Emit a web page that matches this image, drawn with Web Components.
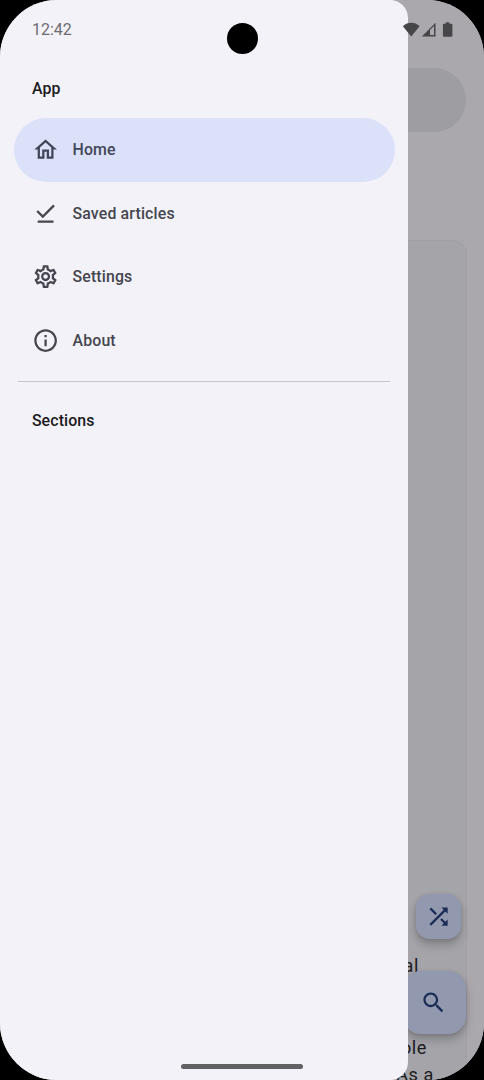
<!DOCTYPE html>
<html lang="en">
<head>
<meta charset="utf-8">
<title>Navigation drawer</title>
<style>
html,body{margin:0;background:#000;overflow:hidden}
body{font-family:Roboto,"Liberation Sans",sans-serif}
</style>
</head>
<body>
<phone-screen>
  <article-page slot="page"></article-page>
  <nav-drawer slot="drawer">
    <drawer-title>App</drawer-title>
    <drawer-item icon="home" selected>Home</drawer-item>
    <drawer-item icon="saved">Saved articles</drawer-item>
    <drawer-item icon="settings">Settings</drawer-item>
    <drawer-item icon="info">About</drawer-item>
    <drawer-divider></drawer-divider>
    <drawer-title>Sections</drawer-title>
  </nav-drawer>
  <status-bar slot="system">12:42</status-bar>
</phone-screen>
<script>
const ICONS = {
  home: 'M12 5.69l5 4.5V18h-2v-6H9v6H7v-7.81l5-4.5M12 3L2 12h3v8h6v-6h2v6h6v-8h3L12 3z',
  saved: 'M20.13 5.41L18.72 4 9.53 13.19 5.28 8.95 3.87 10.36 9.53 16.02zM5 18h14v2H5z',
  settings: 'M19.43 12.98c.04-.32.07-.64.07-.98s-.03-.66-.07-.98l2.11-1.65c.19-.15.24-.42.12-.64l-2-3.46c-.09-.16-.26-.25-.44-.25-.06 0-.12.01-.17.03l-2.49 1c-.52-.4-1.08-.73-1.69-.98l-.38-2.65C14.46 2.18 14.25 2 14 2h-4c-.25 0-.46.18-.49.42l-.38 2.65c-.61.25-1.17.59-1.69.98l-2.49-1c-.06-.02-.12-.03-.18-.03-.17 0-.34.09-.43.25l-2 3.46c-.13.22-.07.49.12.64l2.11 1.65c-.04.32-.07.65-.07.98s.03.66.07.98l-2.11 1.65c-.19.15-.24.42-.12.64l2 3.46c.09.16.26.25.44.25.06 0 .12-.01.17-.03l2.49-1c.52.4 1.08.73 1.69.98l.38 2.65c.03.24.24.42.49.42h4c.25 0 .46-.18.49-.42l.38-2.65c.61-.25 1.17-.59 1.69-.98l2.49 1c.06.02.12.03.18.03.17 0 .34-.09.43-.25l2-3.46c.12-.22.07-.49-.12-.64l-2.11-1.65zm-1.98-1.71c.04.31.05.52.05.73s-.02.43-.05.73l-.14 1.13.89.7 1.08.84-.7 1.21-1.27-.51-1.04-.42-.9.68c-.43.32-.84.56-1.25.73l-1.06.43-.16 1.13-.2 1.35h-1.4l-.19-1.35-.16-1.13-1.06-.43c-.43-.18-.83-.41-1.23-.71l-.91-.7-1.06.43-1.27.51-.7-1.21 1.08-.84.89-.7-.14-1.13c-.03-.31-.05-.54-.05-.74s.02-.43.05-.73l.14-1.13-.89-.7-1.08-.84.7-1.21 1.27.51 1.04.42.9-.68c.43-.32.84-.56 1.25-.73l1.06-.43.16-1.13.2-1.35h1.39l.19 1.35.16 1.13 1.06.43c.43.18.83.41 1.23.71l.91.7 1.06-.43 1.27-.51.7 1.21-1.07.85-.89.7.14 1.13zM12 8c-2.21 0-4 1.79-4 4s1.79 4 4 4 4-1.79 4-4-1.79-4-4-4zm0 6c-1.1 0-2-.9-2-2s.9-2 2-2 2 .9 2 2-.9 2-2 2z',
  info: 'M11 7h2v2h-2zm0 4h2v6h-2zm1-9C6.48 2 2 6.48 2 12s4.48 10 10 10 10-4.48 10-10S17.52 2 12 2zm0 18c-4.41 0-8-3.59-8-8s3.59-8 8-8 8 3.59 8 8-3.59 8-8 8z',
  shuffle: 'M10.59 9.17L5.41 4 4 5.41l5.17 5.17 1.42-1.41zM14.5 4l2.04 2.04L4 18.59 5.41 20 17.96 7.46 20 9.5V4h-5.5zm.33 9.41l-1.41 1.41 3.13 3.13L14.5 20H20v-5.5l-2.04 2.04-3.13-3.13z',
  search: 'M15.5 14h-.79l-.28-.27C15.41 12.59 16 11.11 16 9.5 16 5.91 13.09 3 9.5 3S3 5.91 3 9.5 5.91 16 9.5 16c1.61 0 3.09-.59 4.23-1.57l.27.28v.79l5 4.99L20.49 19l-4.99-5zm-6 0C7.01 14 5 11.99 5 9.5S7.01 5 9.5 5 14 7.01 14 9.5 11.99 14 9.5 14z'
};
function define(name, render) {
  customElements.define(name, class extends HTMLElement {
    constructor() { super(); this.attachShadow({mode: 'open'}); }
    connectedCallback() { this.shadowRoot.innerHTML = render(this); }
  });
}
define('md-icon', el => `<style>
  :host{display:block;width:27.2px;height:27.2px;flex:none}
  svg{display:block;width:100%;height:100%;fill:currentColor}
</style><svg viewBox="0 0 24 24"><path d="${ICONS[el.getAttribute('name')]}"/></svg>`);

define('phone-screen', () => `<style>
  :host{display:grid;position:relative;width:484px;height:1080px;overflow:hidden;border-radius:57px;background:#aaa8ad}
  ::slotted(*){grid-area:1/1}
  .camera{position:absolute;left:227px;top:23px;width:31px;height:31px;border-radius:50%;background:#000}
  .handle{position:absolute;left:180.5px;top:1064px;width:122.5px;height:5px;border-radius:3px;background:#626265}
</style>
<slot name="page"></slot><slot name="drawer"></slot><slot name="system"></slot>
<div class="camera"></div><div class="handle"></div>`);

define('status-bar', () => `<style>
  :host{display:flex;box-sizing:border-box;height:59px;padding:0 30px 0 32px;align-items:center;position:relative;color:#6d6c70;font-size:16px}
  svg{display:block;margin-left:auto;width:52px;height:18px;fill:#464548}
</style><slot></slot>
<svg viewBox="0 0 52 18">
  <path d="M.9 5.2C5.5.6 13 .6 17.6 5.2L9.25 15.5z"/>
  <path fill-rule="evenodd" d="M19.8 15.5L33.5 1.8V15.5zM28 8.9V14H32V4.9z"/>
  <path d="M41.8 2.7H43.7V1.3H47.3V2.7H49.2Q50.4 2.7 50.4 3.9V14.5Q50.4 15.7 49.2 15.7H41.8Q40.9 15.7 40.9 14.5V3.9Q40.9 2.7 41.8 2.7Z"/>
</svg>`);

define('nav-drawer', () => `<style>
  :host{display:flex;flex-direction:column;box-sizing:border-box;position:relative;width:408.3px;height:1080px;padding:59px 13.6px 0;border-radius:0 18px 18px 0;background:#f3f2f9}
</style><slot></slot>`);
define('drawer-title', () => `<style>
  :host{display:flex;align-items:center;height:59px;padding-left:18.3px;color:#1b1b20;font-size:15.87px;font-weight:500;letter-spacing:.13px}
</style><slot></slot>`);
define('drawer-item', el => `<style>
  :host{display:flex;align-items:center;gap:13.6px;height:63.5px;padding-left:18.1px;border-radius:32px;color:#45464f;font-size:15.87px;font-weight:500;letter-spacing:.16px}
  :host([selected]){background:#dce1fa;color:#424659}
</style><md-icon name="${el.getAttribute('icon')}"></md-icon><slot></slot>`);
define('drawer-divider', () => `<style>
  :host{display:block;height:1.2px;margin:9px 4.5px;background:#c6c5cf}
</style>`);

define('article-page', () => `<style>
  :host{display:flex;flex-direction:column;align-items:flex-end;position:relative;height:1080px;box-sizing:border-box;padding:68px 17px 0;background:#aaa8ad}
  .search{box-sizing:border-box;flex:none;width:448px;height:63.5px;margin-right:1px;border-radius:32px;background:#9e9da1}
  .card{box-sizing:border-box;width:450px;height:860px;margin-top:108px;padding:711.6px 0 0;border:1px solid #a19fa5;border-radius:14px;background:#a5a4a9;flex:none;color:#1b1b1e;font-size:18.1px;line-height:27.2px;letter-spacing:.57px;text-align:right}
  .card div{height:27.2px;white-space:nowrap}
  .actions{position:absolute;right:18px;top:894px;display:flex;flex-direction:column;align-items:flex-end;gap:31.5px}
  fab-button:first-child{margin-right:4.6px}
</style>
<div class="search"></div>
<div class="card">
  <div style="padding-right:47px">al</div><div></div><div></div>
  <div style="padding-right:39px">ole</div>
  <div style="padding-right:32px">As a</div>
</div>
<div class="actions"><fab-button icon="shuffle" size="small"></fab-button><fab-button icon="search"></fab-button></div>`);
define('fab-button', el => `<style>
  :host{display:grid;place-items:center;width:63.5px;height:63.5px;border-radius:18px;background:#9299ae;color:#1c2c56;box-shadow:0 6px 10px #0003,0 1px 4px #0002}
  :host([size=small]){width:45.4px;height:45.4px;border-radius:13.6px}
  :host(:not([size=small])) md-icon{margin-right:1.2px}
</style><md-icon name="${el.getAttribute('icon')}"></md-icon>`);
</script>
</body>
</html>
